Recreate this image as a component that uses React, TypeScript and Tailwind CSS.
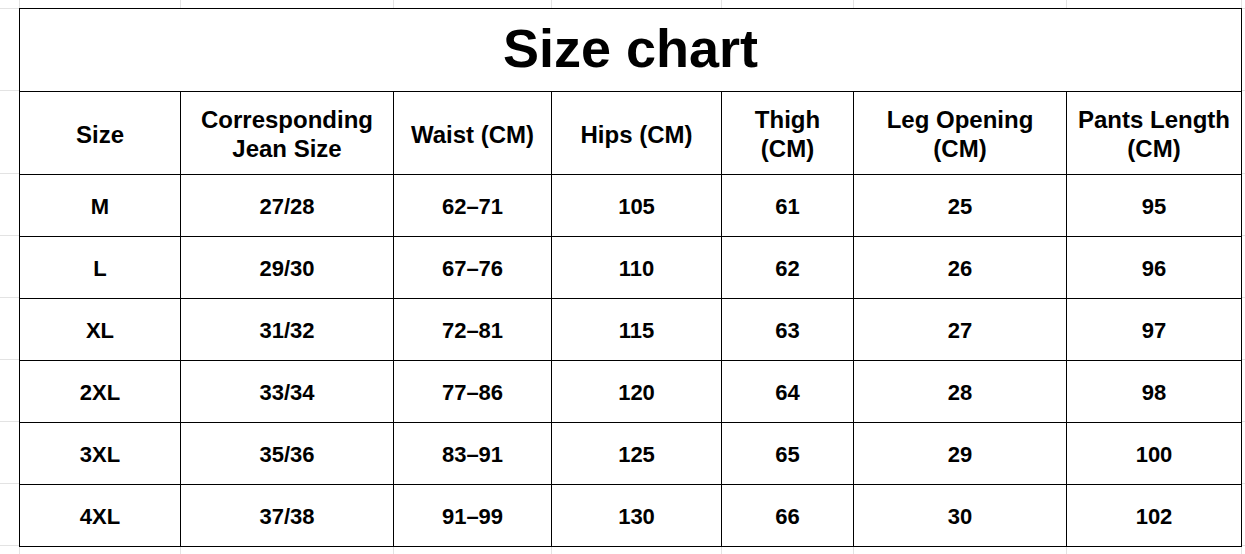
import React from "react";

const colW = [
  "w-[161px]",
  "w-[213px]",
  "w-[158px]",
  "w-[170px]",
  "w-[132px]",
  "w-[213px]",
  "w-[175px]",
];
const rowH = ["h-[83px]", "h-[83px]", "h-[62px]", "h-[62px]", "h-[62px]", "h-[62px]", "h-[62px]", "h-[62px]"];

const headers = [
  "Size",
  "Corresponding\nJean Size",
  "Waist (CM)",
  "Hips (CM)",
  "Thigh\n(CM)",
  "Leg Opening\n(CM)",
  "Pants Length\n(CM)",
];

const rows = [
  ["M", "27/28", "62–71", "105", "61", "25", "95"],
  ["L", "29/30", "67–76", "110", "62", "26", "96"],
  ["XL", "31/32", "72–81", "115", "63", "27", "97"],
  ["2XL", "33/34", "77–86", "120", "64", "28", "98"],
  ["3XL", "35/36", "83–91", "125", "65", "29", "100"],
  ["4XL", "37/38", "91–99", "130", "66", "30", "102"],
];

function HStrip() {
  return (
    <div className="flex h-full">
      <div className="w-[20px] shrink-0 border-r border-[#e3e3e3]" />
      {colW.map((w, i) => (
        <div key={i} className={`${w} shrink-0 border-r border-[#e3e3e3]`} />
      ))}
      <div className="flex-1" />
    </div>
  );
}

export default function App() {
  return (
    <div
      className="w-[1245px] h-[554px] bg-white overflow-hidden text-black"
      style={{ fontFamily: '"Liberation Sans", Arial, sans-serif' }}
    >
      <div className="h-[8px]">
        <HStrip />
      </div>
      <div className="flex">
        <div className="w-[19px] shrink-0 flex flex-col">
          {rowH.map((h, i) => (
            <div key={i} className={`${h} shrink-0 border-b border-[#e3e3e3] ${i === 0 ? "border-t" : ""}`} />
          ))}
        </div>
        <div className="shrink-0 border-l border-t border-black">
          <div className="h-[83px] w-[1222px] border-r border-b border-black flex items-center justify-center">
            <span className="text-[54px] font-bold leading-none pb-[4px]">Size chart</span>
          </div>
          <div className="flex">
            {headers.map((h, i) => (
              <div
                key={i}
                className={`${colW[i]} h-[83px] shrink-0 border-r border-b border-black flex items-center justify-center text-center text-[24px] font-bold leading-[29px] whitespace-pre-line pt-[2px]`}
              >
                {h}
              </div>
            ))}
          </div>
          {rows.map((r, ri) => (
            <div key={ri} className="flex">
              {r.map((c, ci) => (
                <div
                  key={ci}
                  className={`${colW[ci]} h-[62px] shrink-0 border-r border-b border-black flex items-center justify-center text-[22px] font-bold pt-[1px]`}
                >
                  {c}
                </div>
              ))}
            </div>
          ))}
        </div>
        <div className="flex-1 flex flex-col">
          {rowH.map((h, i) => (
            <div key={i} className={`${h} shrink-0 border-b border-[#e3e3e3] ${i === 0 ? "border-t" : ""}`} />
          ))}
        </div>
      </div>
      <div className="h-[8px]">
        <HStrip />
      </div>
    </div>
  );
}
